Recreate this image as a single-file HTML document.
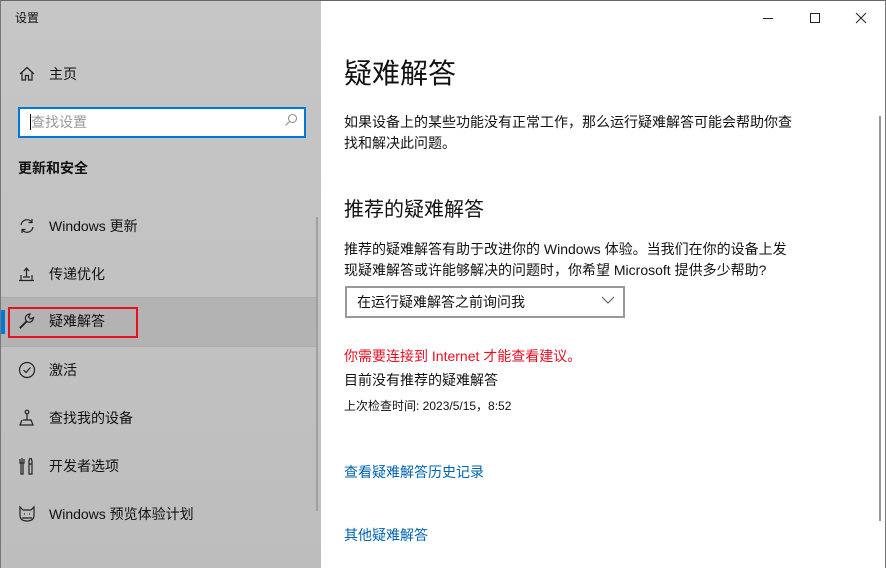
<!DOCTYPE html>
<html><head><meta charset="utf-8"><style>
*{margin:0;padding:0;box-sizing:border-box}
body{width:886px;height:568px;overflow:hidden;font-family:"Liberation Sans","Noto Sans CJK SC",sans-serif;color:#000;position:relative;background:#fff}
#left{position:absolute;left:0;top:0;width:321px;height:568px;background:linear-gradient(180deg,#c6c6c6,#c2c2c2 50%,#bdbdbd);border-left:1px solid #777;border-top:1px solid #666}
#right{position:absolute;left:321px;top:0;width:565px;height:568px;background:#fff;border-top:1px solid #666;border-right:1px solid #777}
.t{position:absolute;white-space:nowrap}
.item{position:absolute;left:0;width:316px;height:48px;font-size:14px}
.item svg{position:absolute;left:17px;top:14px}
.item span{position:absolute;left:48px;top:13px;color:#111}
</style></head><body>
<div id="left">
<div class="t" style="left:14px;top:8px;font-size:12px;color:#111">设置</div>
<div class="item" style="top:50px"><svg width="18" height="18" viewBox="0 0 18 18" fill="none" stroke="#222" stroke-width="1.2"><path d="M2 9 L9 2.5 L16 9 M4 7.5 V15 H7.5 V10.5 H10.5 V15 H14 V7.5"/></svg><span>主页</span></div>
<div style="position:absolute;left:17px;top:106px;width:288px;height:31px;border:2px solid #0078d7;background:#fff"></div>
<div style="position:absolute;left:29px;top:113px;width:1px;height:16px;background:#000"></div>
<div class="t" style="left:30px;top:111px;font-size:14px;color:#999">查找设置</div>
<svg style="position:absolute;left:283px;top:112px" width="14" height="14" viewBox="0 0 14 14" fill="none" stroke="#888" stroke-width="1"><circle cx="8.5" cy="5.5" r="4"/><path d="M5.5 8.5 L1.5 12.5"/></svg>
<div class="t" style="left:17px;top:157px;font-size:14px;font-weight:bold;color:#111">更新和安全</div>
<div class="item" style="top:202px"><svg width="18" height="18" viewBox="0 0 18 18" fill="none" stroke="#222" stroke-width="1.2"><path d="M3 8 A6 6 0 0 1 14 5.5 M15 10 A6 6 0 0 1 4 12.5 M14 2 V5.5 H10.5 M4 16 V12.5 H7.5"/></svg><span>Windows 更新</span></div>
<div class="item" style="top:250px"><svg width="18" height="18" viewBox="0 0 18 18" fill="none" stroke="#222" stroke-width="1.2"><path d="M1 15.5 H16 M3 15 V10 M14 15 V10 M8.5 3 V12 M6 6 L8.5 3 L11 6 M5 12 H12"/></svg><span>传递优化</span></div>
<div style="position:absolute;left:0;top:296px;width:316px;height:50px;background:#b3b3b3;border-top:1px solid #aaa;border-bottom:1px solid #aaa"></div>
<div style="position:absolute;left:0;top:309px;width:4px;height:24px;background:#0078d7"></div>
<div class="item" style="top:297px"><svg width="18" height="18" viewBox="0 0 18 18" fill="none" stroke="#222" stroke-width="1.2"><path d="M2 15.5 L8.5 9 A4 4 0 0 1 10 2.5 L12 2 L10.5 5 L12.5 7 L15.5 5.5 L15 7.5 A4 4 0 0 1 9 9.5 L2.5 16 Z"/></svg><span>疑难解答</span></div>
<div style="position:absolute;left:7px;top:306px;width:130px;height:31px;border:2px solid #e81123"></div>
<div class="item" style="top:346px"><svg width="18" height="18" viewBox="0 0 18 18" fill="none" stroke="#222" stroke-width="1.2"><circle cx="9" cy="9" r="7.5"/><path d="M5.5 9 L8 11.5 L12.5 6.5"/></svg><span>激活</span></div>
<div class="item" style="top:394px"><svg width="18" height="18" viewBox="0 0 18 18" fill="none" stroke="#222" stroke-width="1.2"><circle cx="9" cy="3" r="1.8"/><path d="M9 5 V11 M5 11 H13 L15 16 H2 L4 11"/></svg><span>查找我的设备</span></div>
<div class="item" style="top:442px"><svg width="18" height="18" viewBox="0 0 18 18" fill="none" stroke="#222" stroke-width="1.2"><path d="M4 1 V6 M2 2 V6 H6 V2 M3 6 V17 H5 V6 M12 1 L11 4 V7 H14 V4 L13 1 M11 7 V17 H14 V7"/></svg><span>开发者选项</span></div>
<div class="item" style="top:490px"><svg width="18" height="18" viewBox="0 0 18 18" fill="none" stroke="#222" stroke-width="1.2"><path d="M2 2 L5 5 H13 L16 2 V10 Q16 16 9 16 Q2 16 2 10 Z M6 9 h1 M11 9 h1 M4 13 H14"/></svg><span>Windows 预览体验计划</span></div>
<div style="position:absolute;left:315px;top:216px;width:2px;height:294px;background:#a0a0a0"></div>
</div>
<div id="right">
<svg style="position:absolute;left:440px;top:10px" width="110" height="14" viewBox="0 0 110 14" fill="none" stroke="#222" stroke-width="1"><path d="M2 7.5 H12"/><rect x="49.5" y="2.5" width="9" height="9"/><path d="M95 2 L105 12 M105 2 L95 12"/></svg>
<div class="t" style="left:23px;top:51px;font-size:28px;color:#111">疑难解答</div>
<div class="t" style="left:23px;top:111px;font-size:14px;line-height:21px;color:#111">如果设备上的某些功能没有正常工作，那么运行疑难解答可能会帮助你查<br>找和解决此问题。</div>
<div class="t" style="left:23px;top:192px;font-size:20px;color:#111">推荐的疑难解答</div>
<div class="t" style="left:23px;top:238px;font-size:14px;line-height:21px;color:#111">推荐的疑难解答有助于改进你的 Windows 体验。当我们在你的设备上发<br>现疑难解答或许能够解决的问题时，你希望 Microsoft 提供多少帮助?</div>
<div style="position:absolute;left:24px;top:285px;width:280px;height:32px;border:2px solid #999"></div>
<div class="t" style="left:36px;top:291px;font-size:14px;color:#111">在运行疑难解答之前询问我</div>
<svg style="position:absolute;left:280px;top:295px" width="14" height="9" viewBox="0 0 14 9" fill="none" stroke="#555" stroke-width="1"><path d="M1 1 L7 7 L13 1"/></svg>
<div class="t" style="left:23px;top:345px;font-size:14px;color:#e81123">你需要连接到 Internet 才能查看建议。</div>
<div class="t" style="left:23px;top:369px;font-size:14px;color:#111">目前没有推荐的疑难解答</div>
<div class="t" style="left:23px;top:396px;font-size:12px;color:#111">上次检查时间: 2023/5/15，8:52</div>
<div class="t" style="left:23px;top:461px;font-size:14px;color:#0063b1">查看疑难解答历史记录</div>
<div class="t" style="left:23px;top:524px;font-size:14px;color:#0063b1">其他疑难解答</div>
<div style="position:absolute;left:558px;top:115px;width:2px;height:405px;background:#999"></div>
</div>
</body></html>
